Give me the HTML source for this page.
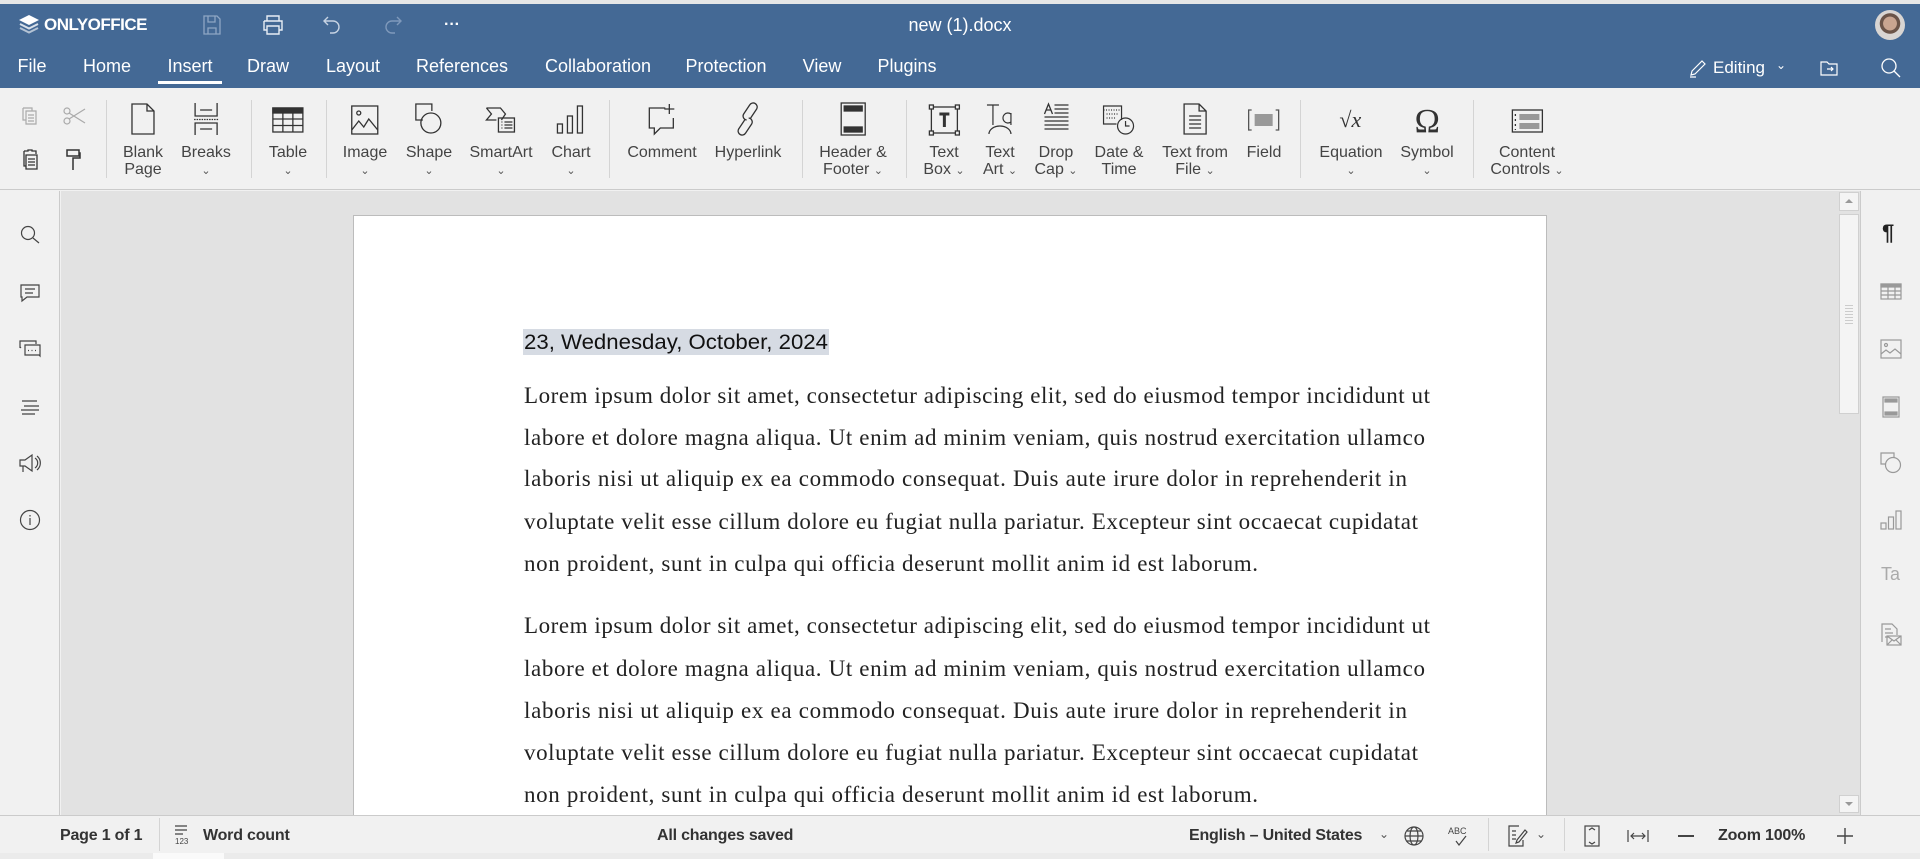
<!DOCTYPE html>
<html style="overflow:hidden;width:1920px;height:859px"><head><meta charset="utf-8"><style>
*{margin:0;padding:0;box-sizing:border-box}
body{width:1920px;height:859px;overflow:hidden;background:#f1f1f1;font-family:"Liberation Sans",Arial,sans-serif;position:relative;color:#333}
.a{position:absolute}
.hdr{left:0;top:4px;width:1920px;height:84px;background:#446995}
.topline{left:0;top:0;width:1920px;height:4px;background:#e6e6e6}
.tab{position:absolute;top:56px;color:#fff;font-size:18px;transform:translateX(-50%);white-space:nowrap}
.tb{left:0;top:88px;width:1920px;height:102px;background:#f1f1f1;border-bottom:1px solid #cbcbcb}
.btn{position:absolute;top:102px;transform:translateX(-50%);text-align:center;font-size:16px;line-height:17px;color:#444;white-space:nowrap}
.btn svg{display:block;margin:0 auto 8px auto}
.chev{font-size:11px;color:#555}
.sep{position:absolute;top:100px;width:1px;height:78px;background:#d4d4d4}
.st{position:absolute;top:827px;font-size:16px;font-weight:bold;color:#333;white-space:nowrap;letter-spacing:-0.2px}
</style></head><body>
<div class="a topline"></div>
<div class="a hdr"></div>
<svg class="a" style="left:18px;top:14px" width="22" height="22" viewBox="0 0 22 22"><path d="M11 1 L21 6 L11 11 L1 6Z" fill="#fff"/><path d="M2 10 L11 14.5 L20 10" stroke="#fff" stroke-width="2" fill="none" opacity=".8"/><path d="M2 14 L11 18.5 L20 14" stroke="#fff" stroke-width="2" fill="none" opacity=".6"/></svg>
<div class="a" style="left:44px;top:15px;color:#fff;font-weight:bold;font-size:17px;letter-spacing:-0.5px">ONLYOFFICE</div>
<svg class="a" style="left:202px;top:14px" width="20" height="22" viewBox="0 0 20 22" fill="none" stroke="#8ea6c4" stroke-width="1.3"><path d="M2 2h13l3 3v15H2z"/><path d="M6 2v6h7V2M6 20v-6h8v6"/></svg>
<svg class="a" style="left:261px;top:14px" width="24" height="22" viewBox="0 0 24 22" fill="none" stroke="#e8eef5" stroke-width="1.4"><path d="M6 7V2h12v5M3 7h18v9h-3M6 16H3V7"/><path d="M6 12h12v8H6z"/></svg>
<svg class="a" style="left:322px;top:14px" width="20" height="22" viewBox="0 0 20 22" fill="none" stroke="#c7d3e3" stroke-width="1.4"><path d="M6 3L2 7l4 4M2 7h9a6 6 0 0 1 0 12H8"/></svg>
<svg class="a" style="left:383px;top:14px" width="20" height="22" viewBox="0 0 20 22" fill="none" stroke="#7f99bb" stroke-width="1.4"><path d="M14 3l4 4-4 4M18 7H9a6 6 0 0 0 0 12h3"/></svg>
<div class="a" style="left:444px;top:16px;color:#fff;font-size:16px;font-weight:bold">···</div>
<div class="a" style="left:960px;top:15px;transform:translateX(-50%);color:#fff;font-size:18px">new (1).docx</div>
<div class="a" style="left:1875px;top:10px;width:30px;height:30px;border-radius:50%;background:radial-gradient(circle at 50% 45%,#c9a590 0 30%,#6b5448 32% 45%,#d9d5d2 47%)"></div>
<div class="tab" style="left:32px">File</div>
<div class="tab" style="left:107px">Home</div>
<div class="tab" style="left:190px">Insert</div>
<div class="a" style="left:158px;top:81px;width:64px;height:3px;background:#fff"></div>
<div class="tab" style="left:268px">Draw</div>
<div class="tab" style="left:353px">Layout</div>
<div class="tab" style="left:462px">References</div>
<div class="tab" style="left:598px">Collaboration</div>
<div class="tab" style="left:726px">Protection</div>
<div class="tab" style="left:822px">View</div>
<div class="tab" style="left:907px">Plugins</div>
<svg class="a" style="left:1688px;top:58px" width="20" height="20" viewBox="0 0 20 20" fill="none" stroke="#fff" stroke-width="1.2"><path d="M3 17l1-4L14 3l3 3L7 16z M2 19h6"/></svg>
<div class="a" style="left:1713px;top:58px;color:#fff;font-size:17px">Editing</div>
<div class="a" style="left:1776px;top:58px;color:#fff;font-size:12px">&#8964;</div>
<svg class="a" style="left:1819px;top:58px" width="20" height="20" viewBox="0 0 20 20" fill="none" stroke="#fff" stroke-width="1.2"><path d="M2 4h6l2 2h8v11H2z M8 11h6 M12 9l2 2-2 2"/></svg>
<svg class="a" style="left:1880px;top:57px" width="22" height="22" viewBox="0 0 22 22" fill="none" stroke="#fff" stroke-width="1.3"><circle cx="9" cy="9" r="7"/><path d="M14 14l6 6"/></svg>
<div class="a tb"></div>
<svg class="a" style="left:20px;top:106px" width="20" height="20" viewBox="0 0 20 20" fill="none" stroke="#aaa" stroke-width="1.2"><path d="M3 2h9v3 M3 2v12h3 M6 5h10v13H6z M8 9h6M8 12h6M8 15h6"/></svg>
<svg class="a" style="left:63px;top:106px" width="24" height="20" viewBox="0 0 24 20" fill="none" stroke="#aaa" stroke-width="1.2"><circle cx="4" cy="5" r="3"/><circle cx="4" cy="15" r="3"/><path d="M6 7l16 10M6 13L22 3"/></svg>
<svg class="a" style="left:20px;top:148px" width="20" height="22" viewBox="0 0 20 22" fill="none" stroke="#333" stroke-width="1.3"><path d="M4 3h4v-1h4v1h4v3 M4 3v15h2 M6 7h11v14H6z M8 11h7M8 14h7M8 17h7"/></svg>
<svg class="a" style="left:65px;top:148px" width="16" height="24" viewBox="0 0 16 24" fill="none" stroke="#333" stroke-width="1.5"><rect x="2" y="2" width="12" height="6"/><path d="M14 5h1v5H8v12"/></svg>
<div class="sep" style="left:106px"></div>
<div class="btn" style="left:143px"><svg width="28" height="34" viewBox="0 0 28 34" fill="none" stroke="#333" stroke-width="1.3"><path d="M3 2h15l7 7v23H3z M18 2v7h7"/></svg>Blank<br>Page</div>
<div class="btn" style="left:206px"><svg width="30" height="34" viewBox="0 0 30 34" fill="none" stroke="#333" stroke-width="1.3"><path d="M4 1v13h22V1 M9 8h12 M4 33V21h22v12 M9 27h12"/><path d="M3 17.5h24" stroke-dasharray="1.5 1"/></svg>Breaks<br><span class="chev">&#8964;</span></div>
<div class="sep" style="left:251px"></div>
<div class="btn" style="left:288px"><svg width="34" height="34" viewBox="0 0 34 34" fill="none" stroke="#333" stroke-width="1.3"><rect x="2" y="6" width="30" height="24"/><rect x="2" y="6" width="30" height="5" fill="#333"/><path d="M2 17h30M2 23.5h30M12 11v19M22 11v19"/></svg>Table<br><span class="chev">&#8964;</span></div>
<div class="sep" style="left:326px"></div>
<div class="btn" style="left:365px"><svg width="30" height="34" viewBox="0 0 30 34" fill="none" stroke="#333" stroke-width="1.3"><rect x="2" y="4" width="26" height="28"/><circle cx="9" cy="11" r="2"/><path d="M2 28l7-9 5 6 5-8 9 11"/></svg>Image<br><span class="chev">&#8964;</span></div>
<div class="btn" style="left:429px"><svg width="30" height="34" viewBox="0 0 30 34" fill="none" stroke="#333" stroke-width="1.3"><path d="M9 18H2V2h16v7"/><circle cx="17" cy="21" r="10"/></svg>Shape<br><span class="chev">&#8964;</span></div>
<div class="btn" style="left:501px"><svg width="34" height="34" viewBox="0 0 34 34" fill="none" stroke="#333" stroke-width="1.3"><path d="M2 6h14l5 6-4 6 M2 6l5 6-5 6h10"/><rect x="14" y="16" width="16" height="14"/><path d="M17 20h1M20 20h8M17 23h1M20 23h8M17 26h1M20 26h8"/></svg>SmartArt<br><span class="chev">&#8964;</span></div>
<div class="btn" style="left:571px"><svg width="32" height="34" viewBox="0 0 32 34" fill="none" stroke="#333" stroke-width="1.3"><rect x="2" y="22" width="5" height="9"/><rect x="12" y="14" width="5" height="17"/><rect x="22" y="4" width="5" height="27"/></svg>Chart<br><span class="chev">&#8964;</span></div>
<div class="sep" style="left:609px"></div>
<div class="btn" style="left:662px"><svg width="34" height="34" viewBox="0 0 34 34" fill="none" stroke="#333" stroke-width="1.3"><path d="M20 6H4v20h5v6l6-6h13V16 M24 2v10M19 7h10"/></svg>Comment</div>
<div class="btn" style="left:748px"><svg width="34" height="34" viewBox="0 0 34 34" fill="none" stroke="#333" stroke-width="1.3"><path d="M14 18l-6 9a4 4 0 0 0 7 4l6-9a4 4 0 0 0-3-6 M20 16l6-9a4 4 0 0 0-7-4l-6 9a4 4 0 0 0 3 6"/></svg>Hyperlink</div>
<div class="sep" style="left:802px"></div>
<div class="btn" style="left:853px"><svg width="28" height="34" viewBox="0 0 28 34" fill="none" stroke="#333" stroke-width="1.3"><rect x="2" y="1" width="24" height="32"/><rect x="5" y="4" width="18" height="5" fill="#333"/><rect x="5" y="25" width="18" height="5" fill="#333"/></svg>Header &amp;<br>Footer <span class="chev">&#8964;</span></div>
<div class="sep" style="left:906px"></div>
<div class="btn" style="left:944px"><svg width="32" height="34" viewBox="0 0 32 34" fill="none" stroke="#333" stroke-width="1.3"><rect x="3" y="5" width="26" height="26"/><rect x="1" y="3" width="4" height="4" fill="#f1f1f1"/><rect x="27" y="3" width="4" height="4" fill="#f1f1f1"/><rect x="1" y="29" width="4" height="4" fill="#f1f1f1"/><rect x="27" y="29" width="4" height="4" fill="#f1f1f1"/><path d="M11 12h10M16 12v13" stroke-width="3"/></svg>Text<br>Box <span class="chev">&#8964;</span></div>
<div class="btn" style="left:1000px"><svg width="30" height="34" viewBox="0 0 30 34" fill="none" stroke="#333" stroke-width="1.2"><path d="M2 3h12M8 3v20 M26 12a5 5 0 1 0 0 8v3v-12 M4 32a11 8 0 0 1 22 0"/></svg>Text<br>Art <span class="chev">&#8964;</span></div>
<div class="btn" style="left:1056px"><svg width="30" height="34" viewBox="0 0 30 34" fill="none" stroke="#333" stroke-width="1.3"><path d="M3 12l4-10 4 10M4.5 8h5 M13 3h14M13 7h14M13 11h14M3 15h24M3 19h24M3 23h24M3 27h24"/></svg>Drop<br>Cap <span class="chev">&#8964;</span></div>
<div class="btn" style="left:1119px"><svg width="34" height="34" viewBox="0 0 34 34" fill="none" stroke="#333" stroke-width="1.2"><path d="M20 18V4H2v18h13"/><path d="M2 8h18" stroke-dasharray="1 1.5"/><path d="M5 12h12M5 16h10" stroke-dasharray="1 1.5"/><circle cx="24" cy="24" r="8"/><path d="M24 19v5h4"/></svg>Date &amp;<br>Time</div>
<div class="btn" style="left:1195px"><svg width="28" height="34" viewBox="0 0 28 34" fill="none" stroke="#333" stroke-width="1.3"><path d="M3 2h15l7 7v23H3z M18 2v7h7 M8 14h12M8 18h12M8 22h12M8 26h12"/></svg>Text from<br>File <span class="chev">&#8964;</span></div>
<div class="btn" style="left:1264px"><svg width="34" height="34" viewBox="0 0 34 34" fill="none" stroke="#555" stroke-width="1.3"><path d="M5 8H2v20h3 M29 8h3v20h-3"/><rect x="8" y="12" width="18" height="12" fill="#999" stroke="none"/></svg>Field</div>
<div class="sep" style="left:1300px"></div>
<div class="btn" style="left:1351px"><svg width="34" height="34" viewBox="0 0 34 34"><text x="5" y="25" font-family="Liberation Serif" font-size="22" font-style="italic" fill="#333">√x</text></svg>Equation<br><span class="chev">&#8964;</span></div>
<div class="btn" style="left:1427px"><svg width="34" height="34" viewBox="0 0 34 34"><text x="17" y="30" text-anchor="middle" font-family="Liberation Serif" font-size="34" fill="#333">Ω</text></svg>Symbol<br><span class="chev">&#8964;</span></div>
<div class="sep" style="left:1473px"></div>
<div class="btn" style="left:1527px"><svg width="34" height="34" viewBox="0 0 34 34" fill="none" stroke="#333" stroke-width="1.3"><rect x="2" y="8" width="30" height="22"/><rect x="9" y="12" width="20" height="6" fill="#999" stroke="none"/><rect x="9" y="21" width="20" height="6" fill="#999" stroke="none"/><path d="M5 12v2M5 17v2M5 22v2M5 27v1"/></svg>Content<br>Controls <span class="chev">&#8964;</span></div>
<div class="a" style="left:0;top:191px;width:60px;height:624px;background:#f1f1f1;border-right:1px solid #cbcbcb"></div>
<div class="a" style="left:61px;top:191px;width:1799px;height:624px;background:#e2e2e2"></div>
<div class="a" style="left:1860px;top:191px;width:60px;height:624px;background:#f1f1f1;border-left:1px solid #cbcbcb"></div>
<svg class="a" style="left:19px;top:224px" width="22" height="22" viewBox="0 0 22 22" fill="none" stroke="#444" stroke-width="1.2"><circle cx="9" cy="9" r="6.5"/><path d="M14 14l6 5"/></svg>
<svg class="a" style="left:19px;top:283px" width="22" height="20" viewBox="0 0 22 20" fill="none" stroke="#444" stroke-width="1.2"><path d="M2 2h18v12H8l-5 4v-4H2z M6 6h10M6 10h8"/></svg>
<svg class="a" style="left:18px;top:339px" width="24" height="20" viewBox="0 0 24 20" fill="none" stroke="#444" stroke-width="1.2"><path d="M2 9V2h16v3 M2 9l1-1 M7 6h15v11l-1-1H7z M10 11.5h1M13.5 11.5h1M17 11.5h1"/></svg>
<svg class="a" style="left:19px;top:397px" width="22" height="20" viewBox="0 0 22 20" fill="none" stroke="#444" stroke-width="1.2"><path d="M3 4h15M5 9h15M2 13h18M3 17h13"/></svg>
<svg class="a" style="left:18px;top:452px" width="24" height="22" viewBox="0 0 24 22" fill="none" stroke="#444" stroke-width="1.2"><path d="M2 8h5l7-5v16l-7-5H2z M5 14v6 M17 6a6 6 0 0 1 0 10 M19 4a9 9 0 0 1 0 14"/></svg>
<svg class="a" style="left:19px;top:509px" width="22" height="22" viewBox="0 0 22 22" fill="none" stroke="#444" stroke-width="1.2"><circle cx="11" cy="11" r="9.5"/><path d="M11 9v7M11 6v1.5"/></svg>
<div class="a" style="left:353px;top:215px;width:1194px;height:600px;background:#fff;border:1px solid #bcbcbc;border-bottom:none"></div>
<div class="a" style="left:523px;top:329px;width:306px;height:26px;background:#d6dbe3"></div>
<svg class="a" style="left:0;top:0" width="1920" height="815">
<g font-family="Liberation Sans,Arial,sans-serif" font-size="21" fill="#111"><text x="524" y="349" textLength="304" lengthAdjust="spacingAndGlyphs">23, Wednesday, October, 2024</text></g>
<g font-family="Liberation Serif,serif" font-size="23" fill="#222">
<text x="524" y="403" textLength="906">Lorem ipsum dolor sit amet, consectetur adipiscing elit, sed do eiusmod tempor incididunt ut</text>
<text x="524" y="445" textLength="901">labore et dolore magna aliqua. Ut enim ad minim veniam, quis nostrud exercitation ullamco</text>
<text x="524" y="486" textLength="883">laboris nisi ut aliquip ex ea commodo consequat. Duis aute irure dolor in reprehenderit in</text>
<text x="524" y="529" textLength="894">voluptate velit esse cillum dolore eu fugiat nulla pariatur. Excepteur sint occaecat cupidatat</text>
<text x="524" y="571" textLength="734">non proident, sunt in culpa qui officia deserunt mollit anim id est laborum.</text>
<text x="524" y="633" textLength="906">Lorem ipsum dolor sit amet, consectetur adipiscing elit, sed do eiusmod tempor incididunt ut</text>
<text x="524" y="676" textLength="901">labore et dolore magna aliqua. Ut enim ad minim veniam, quis nostrud exercitation ullamco</text>
<text x="524" y="718" textLength="883">laboris nisi ut aliquip ex ea commodo consequat. Duis aute irure dolor in reprehenderit in</text>
<text x="524" y="760" textLength="894">voluptate velit esse cillum dolore eu fugiat nulla pariatur. Excepteur sint occaecat cupidatat</text>
<text x="524" y="802" textLength="734">non proident, sunt in culpa qui officia deserunt mollit anim id est laborum.</text>
</g></svg>
<div class="a" style="left:1839px;top:192px;width:20px;height:19px;background:#f4f4f4;border:1px solid #d0d0d0"></div>
<div class="a" style="left:1845px;top:199px;width:0;height:0;border-left:4px solid transparent;border-right:4px solid transparent;border-bottom:4px solid #999"></div>
<div class="a" style="left:1839px;top:214px;width:20px;height:200px;background:#f4f4f4;border:1px solid #d0d0d0"></div>
<div class="a" style="left:1845px;top:305px;width:8px;height:20px;background:repeating-linear-gradient(#ccc 0 1px,transparent 1px 3px)"></div>
<div class="a" style="left:1839px;top:795px;width:20px;height:18px;background:#f4f4f4;border:1px solid #d0d0d0"></div>
<div class="a" style="left:1845px;top:802px;width:0;height:0;border-left:4px solid transparent;border-right:4px solid transparent;border-top:4px solid #999"></div>
<div class="a" style="left:1882px;top:220px;font-size:22px;color:#222;font-weight:bold">¶</div>
<svg class="a" style="left:1880px;top:283px" width="22" height="17" viewBox="0 0 22 17" fill="none" stroke="#999" stroke-width="1.2"><rect x="1" y="1" width="20" height="15"/><rect x="1" y="1" width="20" height="3" fill="#999"/><path d="M1 8h20M1 12h20M8 4v12M15 4v12"/></svg>
<svg class="a" style="left:1880px;top:338px" width="22" height="22" viewBox="0 0 22 22" fill="none" stroke="#999" stroke-width="1.2"><rect x="1" y="2" width="20" height="18"/><circle cx="6" cy="7" r="1.5"/><path d="M1 16l5-4 4 3 5-4 6 5"/></svg>
<svg class="a" style="left:1881px;top:395px" width="20" height="24" viewBox="0 0 20 24" fill="none" stroke="#999" stroke-width="1.2"><rect x="2" y="2" width="16" height="20"/><rect x="4" y="4" width="12" height="3" fill="#999"/><rect x="4" y="17" width="12" height="3" fill="#999"/></svg>
<svg class="a" style="left:1880px;top:452px" width="22" height="22" viewBox="0 0 22 22" fill="none" stroke="#999" stroke-width="1.2"><path d="M6 12H1V1h13v4"/><circle cx="13" cy="13" r="7.5"/></svg>
<svg class="a" style="left:1880px;top:510px" width="22" height="22" viewBox="0 0 22 22" fill="none" stroke="#999" stroke-width="1.2"><rect x="1" y="13" width="5" height="6"/><rect x="8.5" y="7" width="5" height="12"/><rect x="16" y="1" width="5" height="18"/></svg>
<div class="a" style="left:1881px;top:564px;font-size:18px;color:#aaa">Ta</div>
<svg class="a" style="left:1880px;top:622px" width="22" height="24" viewBox="0 0 22 24" fill="none" stroke="#999" stroke-width="1.2"><path d="M2 20V2h10l5 5v6 M5 7h6M5 11h8M5 15h3"/><rect x="7" y="14" width="14" height="9"/><path d="M7 14l7 5 7-5M7 23l5-5M21 23l-5-5"/></svg>
<div class="a" style="left:0;top:815px;width:1920px;height:38px;background:#f1f1f1;border-top:1px solid #cbcbcb"></div>
<div class="a" style="left:0;top:853px;width:1920px;height:6px;background:#ebebeb"></div>
<div class="a" style="left:153px;top:853px;width:71px;height:6px;background:#fafafa"></div>
<div class="st" style="left:60px">Page 1 of 1</div>
<div class="a" style="left:159px;top:818px;width:1px;height:33px;background:#d4d4d4"></div>
<svg class="a" style="left:173px;top:823px" width="20" height="24" viewBox="0 0 20 24" fill="none" stroke="#444" stroke-width="1.2"><path d="M2 3h12M2 7h12M2 11h8"/><text x="2" y="21" font-size="8" fill="#444" stroke="none" font-family="Liberation Sans">123</text></svg>
<div class="st" style="left:203px">Word count</div>
<div class="st" style="left:657px">All changes saved</div>
<div class="st" style="left:1189px">English – United States</div>
<div class="a" style="left:1379px;top:827px;font-size:12px;color:#555">&#8964;</div>
<svg class="a" style="left:1403px;top:825px" width="22" height="22" viewBox="0 0 22 22" fill="none" stroke="#444" stroke-width="1.2"><circle cx="11" cy="11" r="9"/><ellipse cx="11" cy="11" rx="4" ry="9"/><path d="M2 11h18M4 6h14M4 16h14"/></svg>
<div class="a" style="left:1448px;top:826px;font-size:9px;color:#444">ABC</div>
<svg class="a" style="left:1450px;top:835px" width="18" height="12" viewBox="0 0 18 12" fill="none" stroke="#444" stroke-width="1.2"><path d="M6 6l3 4 7-9"/></svg>
<div class="a" style="left:1488px;top:818px;width:1px;height:33px;background:#d4d4d4"></div>
<svg class="a" style="left:1507px;top:824px" width="22" height="24" viewBox="0 0 22 24" fill="none" stroke="#444" stroke-width="1.2"><path d="M12 2H2v20h14v-6 M5 7h4M5 11h4M5 15h4 M10 16l8-10 2 2-8 10-3 1z"/></svg>
<div class="a" style="left:1536px;top:827px;font-size:12px;color:#555">&#8964;</div>
<div class="a" style="left:1564px;top:818px;width:1px;height:33px;background:#d4d4d4"></div>
<svg class="a" style="left:1583px;top:825px" width="18" height="22" viewBox="0 0 18 22" fill="none" stroke="#444" stroke-width="1.2"><rect x="2" y="1" width="14" height="20"/><path d="M6 5l3-2 3 2M6 17l3 2 3-2"/></svg>
<svg class="a" style="left:1626px;top:827px" width="24" height="18" viewBox="0 0 24 18" fill="none" stroke="#444" stroke-width="1.2"><path d="M2 3v12M22 3v12M5 9h14M8 6l-3 3 3 3M16 6l3 3-3 3"/></svg>
<div class="a" style="left:1678px;top:835px;width:16px;height:1.5px;background:#444"></div>
<div class="st" style="left:1718px">Zoom 100%</div>
<svg class="a" style="left:1836px;top:827px" width="18" height="18" viewBox="0 0 18 18" stroke="#444" stroke-width="1.4"><path d="M9 1v16M1 9h16"/></svg>
</body></html>
